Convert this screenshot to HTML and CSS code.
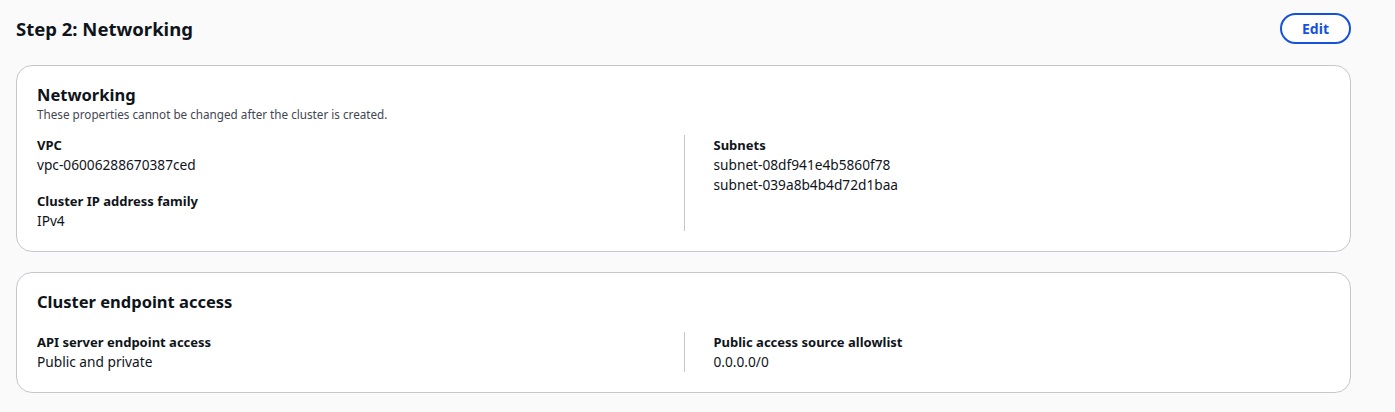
FILE: index.html
```html
<!DOCTYPE html>
<html>
<head>
<meta charset="utf-8">
<link rel="stylesheet" href="styles.css">
</head>
<body>
<div class="page">
  <div class="header">
    <h2 class="title">Step 2: Networking</h2>
    <button class="btn">Edit</button>
  </div>
  <div class="card">
    <div class="card-head">
      <h3 class="card-title">Networking</h3>
      <div class="card-desc">These properties cannot be changed after the cluster is created.</div>
    </div>
    <div class="cols">
      <div class="col">
        <div class="kv">
          <div class="label">VPC</div>
          <div class="value">vpc-06006288670387ced</div>
        </div>
        <div class="kv">
          <div class="label">Cluster IP address family</div>
          <div class="value">IPv4</div>
        </div>
      </div>
      <div class="col col-div">
        <div class="kv">
          <div class="label">Subnets</div>
          <div class="value">subnet-08df941e4b5860f78</div>
          <div class="value">subnet-039a8b4b4d72d1baa</div>
        </div>
      </div>
    </div>
  </div>
  <div class="card">
    <div class="card-head card-head-2">
      <h3 class="card-title">Cluster endpoint access</h3>
    </div>
    <div class="cols">
      <div class="col">
        <div class="kv">
          <div class="label">API server endpoint access</div>
          <div class="value">Public and private</div>
        </div>
      </div>
      <div class="col col-div">
        <div class="kv">
          <div class="label">Public access source allowlist</div>
          <div class="value">0.0.0.0/0</div>
        </div>
      </div>
    </div>
  </div>
</div>
</body>
</html>
```
FILE: styles.css
```css
html, body {
  margin: 0;
  padding: 0;
  background: #fafafa;
}
body {
  font-family: "Noto Sans", "Open Sans", Arial, sans-serif;
  color: #0f141a;
}
.page {
  width: 1335px;
  padding: 13px 0 0 16px;
  display: flex;
  flex-direction: column;
  gap: 20px;
}
.header {
  display: flex;
  align-items: center;
  justify-content: space-between;
  height: 31px;
  margin-bottom: 1px;
}
.title {
  margin: 0;
  font-size: 18.5px;
  line-height: 24px;
  font-weight: 700;
}
.btn {
  width: 71px;
  height: 31px;
  border: 2px solid #1452dc;
  border-radius: 16px;
  background: #ffffff;
  color: #1452dc;
  font-family: inherit;
  font-size: 14px;
  font-weight: 700;
  padding: 0;
}
.card {
  background: #ffffff;
  border: 1px solid #c6c6cd;
  border-radius: 16px;
  padding: 18px 20px 20px 20px;
}
.card-title {
  margin: 0;
  font-size: 16.5px;
  line-height: 22px;
  font-weight: 700;
}
.card-desc {
  font-size: 11.7px;
  line-height: 16px;
  color: #424650;
}
.card-head {
  margin-bottom: 13px;
}
.card-head-2 {
  margin-bottom: 19px;
}
.cols {
  display: grid;
  grid-template-columns: 1fr 1fr;
}
.col {
  display: flex;
  flex-direction: column;
  gap: 16px;
}
.col-div {
  border-left: 1px solid #c6c6cd;
  padding-left: 29px;
}
.label {
  font-size: 13px;
  line-height: 20px;
  font-weight: 700;
}
.value {
  font-size: 13.7px;
  line-height: 20px;
}
```
